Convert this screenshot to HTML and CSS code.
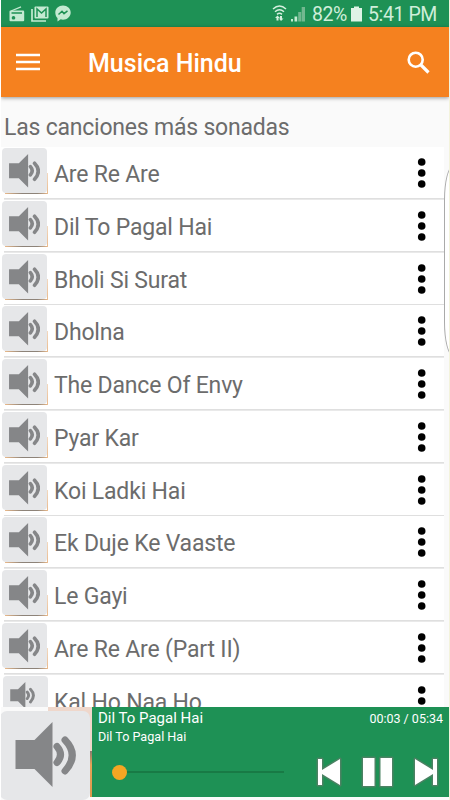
FILE: index.html
```html
<!DOCTYPE html>
<html lang="es">
  <head>
    <meta charset="UTF-8">
    <meta name="viewport" content="width=device-width, initial-scale=1.0">
    <title>Musica Hindu</title>
    <link rel="stylesheet" href="styles.css">
    <script src="script.js" defer></script>
  </head>
  <body>
    <svg class="symbols" width="0" height="0">
      <symbol id="speaker" viewBox="0 0 60 66">
        <path d="M0 18h19L37 0v65L19 47H0z" fill="#858688"/>
        <path d="M41.500 24.500q7 8 0 16M49.500 18q14.500 15 0 31" fill="none" stroke="#858688" stroke-width="7" stroke-linecap="round"/>
      </symbol>
    </svg>
    <div class="app">
      <div class="status-bar">
        <div class="notifications">
          <svg width="16" height="16" viewBox="0 0 16 16">
            <path d="M2 5 12 0.800" stroke="#c4ead2" stroke-width="1.300"/>
            <path fill="#c4ead2" fill-rule="evenodd" d="M1.500 4.500h12.500a1.200 1.200 0 0 1 1.200 1.200v8.500a1 1 0 0 1-1 1H1.500a1 1 0 0 1-1-1V5.500a1 1 0 0 1 1-1zM2.500 6.300v1.500h10.500v-1.500zM4.500 10a1.800 1.800 0 1 0 .01 0z"/>
          </svg>
          <svg width="18" height="16" viewBox="0 0 18 16">
            <path d="M1 3v12h14" fill="none" stroke="#c4ead2" stroke-width="1.700"/>
            <rect x="3.500" y="0.500" width="14" height="12" rx="1" fill="#c4ead2"/>
            <path d="M6 11V3l4.500 4L15 3v8" fill="none" stroke="#1e9155" stroke-width="1.500"/>
          </svg>
          <svg width="16" height="17" viewBox="0 0 16 17">
            <path fill="#c4ead2" d="M8 .5c4.300 0 7.700 3 7.700 7s-3.400 7.200-7.700 7.200q-1.200 0-2.300-.4L2.500 16.500v-3.400C1 11.700.3 9.700.3 7.500.3 3.500 3.700.5 8 .5z"/>
            <path d="M3.500 9.500 7 6.300l2 2.300 3.500-2.800" fill="none" stroke="#1e9155" stroke-width="1.500"/>
          </svg>
        </div>
        <div class="system">
          <svg class="wifi" width="15" height="17" viewBox="0 0 15 17">
            <path d="M1 4q6.500-6 13 0M3 6.800q4.500-4 9 0M5 9.300q2.500-2 5 0" fill="none" stroke="#d5f0df" stroke-width="1.500"/>
            <path fill="#d5f0df" d="M5.500 10.500 8 13H6.500v2.500h-2V13H3zM8 11h2v2.500h1.500L9 16l-2-2.500h1z"/>
          </svg>
          <svg class="signal" width="16" height="16" viewBox="0 0 16 16">
            <path fill="#c4ead2" d="M1 13h2v2.500H1zM4.500 10.500h2.700v5H4.500z"/>
            <path fill="#72b890" d="M8.200 6h3v9.500h-3zM11.700 1H15v14.500h-3.300z"/>
          </svg>
          <span class="percent">82%</span>
          <svg class="battery" width="11" height="16" viewBox="0 0 11 16">
            <path fill="#dff3e6" d="M3 .5h5V2h3v13.500H0V2h3z"/>
          </svg>
          <span class="clock">5:41 PM</span>
        </div>
      </div>

      <header class="toolbar">
        <svg class="menu" width="24" height="18" viewBox="0 0 24 18">
          <path d="M0 2h24M0 9h24M0 16h24" stroke="#fff" stroke-width="2.300"/>
        </svg>
        <h1>Musica Hindu</h1>
        <svg class="search" width="23" height="23" viewBox="0 0 23 23">
          <circle cx="8.700" cy="8.700" r="7" fill="none" stroke="#fff" stroke-width="2.600"/>
          <path d="m13.500 13.500 8 8" stroke="#fff" stroke-width="3.200"/>
        </svg>
      </header>

      <h2><span>Las canciones más sonadas</span></h2>
      <ul class="songs" id="songs"></ul>

      <footer class="player">
        <div class="cover">
          <div class="cover-tile">
            <svg width="61" height="66"><use href="#speaker"/></svg>
          </div>
        </div>
        <div class="panel">
          <div class="track">
            <div class="names">
              <div class="track-title">Dil To Pagal Hai</div>
              <div class="track-album">Dil To Pagal Hai</div>
            </div>
            <div class="time">00:03 / 05:34</div>
          </div>
          <div class="controls">
            <div class="seek"><span class="thumb"></span><span class="line"></span></div>
            <svg width="128" height="34" viewBox="0 0 128 34">
              <g fill="#4b8263" stroke="#4b8263" stroke-width="3" stroke-linejoin="round">
                <path d="M3 4h4v11L25 4v26L7 19v11H3z"/>
                <path d="M48 3h11.500v28H48zM65.500 3H77v28H65.500z"/>
                <path d="M100 4l18 11V4h4v26h-4V19l-18 11z"/>
              </g>
              <g fill="#fff">
                <path d="M3 4h4v11L25 4v26L7 19v11H3z"/>
                <path d="M48 3h11.500v28H48zM65.500 3H77v28H65.500z"/>
                <path d="M100 4l18 11V4h4v26h-4V19l-18 11z"/>
              </g>
            </svg>
          </div>
        </div>
      </footer>
      <div class="edge-handle"></div>
    </div>
  </body>
</html>
```
FILE: styles.css
```css
* {
  box-sizing: border-box;
}

body {
  margin: 0;
  background: #fff;
  font-family: Roboto, sans-serif;
  color: #6c6c6c;
}

.symbols {
  position: absolute;
}

.app {
  position: relative;
  width: 450px;
  height: 800px;
  overflow: hidden;
  display: flex;
  flex-direction: column;
  background: #fafafa;
  border-left: 1px solid #fff;
  border-right: 1px solid #f3f3dc;
}

svg {
  display: block;
  flex: none;
}

.status-bar {
  flex: none;
  height: 27px;
  margin-left: -1px;
  padding: 0 12px 0 9px;
  display: flex;
  justify-content: space-between;
  align-items: center;
  background: #1e9155;
  color: #cfeeda;
  font-size: 19.500px;
}

.notifications,
.system {
  display: flex;
  align-items: center;
}

.notifications {
  gap: 6px;
}

.signal {
  margin: 0 6px 0 3px;
}

.percent {
  width: 35px;
  letter-spacing: -0.5px;
}

.battery {
  margin: 0 6px 0 4px;
}

.clock {
  width: 69px;
  white-space: nowrap;
  letter-spacing: -0.4px;
}

.percent,
.clock {
  padding-top: 1px;
}

.toolbar {
  position: relative;
  flex: none;
  height: 70px;
  padding: 0 19px 0 15px;
  display: flex;
  align-items: center;
  background: #f5811f;
  box-shadow: 0 1px 4px rgba(0, 0, 0, 0.4);
}

h1 {
  flex: 1;
  margin: 2px 0 0 48px;
  color: #fff;
  font-size: 25px;
  font-weight: 500;
}

h2 {
  flex: none;
  height: 50px;
  margin: 0;
  padding: 16px 0 0 3px;
  font-size: 23px;
  letter-spacing: -0.210px;
  line-height: 30px;
  font-weight: 400;
}

.songs {
  flex: 1;
  min-height: 0;
  overflow: hidden;
  margin: 0;
  padding: 0;
  width: 443px;
  list-style: none;
  background: #fff;
}

.song {
  height: 52.750px;
  padding: 1px 17px 0 1px;
  display: flex;
  background: linear-gradient(#dfdfdf, #dfdfdf) 3px 51px / 440px 1.700px no-repeat;
}

.thumbnail {
  width: 46px;
  height: 47px;
  padding: 0 1px 1px 0;
  background:
    linear-gradient(#f3d9c0, #e9b98b) 45px 25px / 1px 21px no-repeat,
    linear-gradient(90deg, #e9b98b, #8d8379 40%, #8d8379 75%, #e9b98b) 3px 45px / 43px 1px no-repeat;
}

.tile {
  height: 45px;
  padding: 6px 0 0 7px;
  border-radius: 4px;
  background: #e6e7e9;
}

.song-name {
  flex: 1;
  padding: 2px 0 0 6px;
  font-size: 23px;
  letter-spacing: -0.180px;
  line-height: 50px;
}

.song:last-child .thumbnail {
  margin-left: 1px;
  background: none;
}

.song:last-child .song-name {
  padding-left: 5px;
}

.player {
  position: relative;
  flex: none;
  height: 93px;
  margin-left: -1px;
  display: flex;
}

.cover {
  width: 92px;
  height: 90px;
  padding-top: 4px;
  background:
    linear-gradient(#897a70, #e6a358 30%, #dc984e) 90px 44px / 2px 46px no-repeat,
    linear-gradient(#efd7cb, #efd7cb) 48px 0 / 44px 44px no-repeat;
}

.cover-tile {
  width: 90px;
  height: 89px;
  padding: 11px 0 0 15px;
  border-radius: 7px;
  background: #e6e7e9;
}

.panel {
  flex: 1;
  height: 90px;
  padding: 3px 6px 0;
  background: #1e9155;
  color: #fff;
}

.track {
  display: flex;
  justify-content: space-between;
  height: 43px;
}

.track-title {
  font-size: 15px;
  line-height: 16px;
}

.track-album {
  font-size: 12.600px;
  line-height: 21px;
}

.time {
  font-size: 12.500px;
  line-height: 17px;
}

.controls {
  display: flex;
  align-items: center;
  justify-content: space-between;
  height: 38px;
}

.seek {
  display: flex;
  align-items: center;
  width: 186px;
  padding-left: 14px;
}

.thumb {
  width: 15px;
  height: 15px;
  border-radius: 50%;
  background: #f5a623;
}

.line {
  flex: 1;
  height: 2px;
  background: #187a45;
}

.edge-handle {
  position: absolute;
  top: 166px;
  right: -13px;
  width: 18px;
  height: 190px;
  border: 1px solid #aaa;
  border-radius: 9px / 34px;
  background: #fff;
}
```
FILE: script.js
```javascript
const songs = [
  'Are Re Are',
  'Dil To Pagal Hai',
  'Bholi Si Surat',
  'Dholna',
  'The Dance Of Envy',
  'Pyar Kar',
  'Koi Ladki Hai',
  'Ek Duje Ke Vaaste',
  'Le Gayi',
  'Are Re Are (Part II)',
  'Kal Ho Naa Ho'
];

const list = document.getElementById('songs');

songs.forEach((name, i) => {
  const size = i === songs.length - 1 ? 'width="25" height="27"' : 'width="31" height="34"';
  const item = document.createElement('li');
  item.className = 'song';
  item.innerHTML = `
    <div class="thumbnail"><div class="tile"><svg ${size}><use href="#speaker"/></svg></div></div>
    <span class="song-name">${name}</span>
    <svg width="10" height="51" viewBox="0 0 10 51" fill="#000">
      <circle cx="4.700" cy="14" r="3.800"/>
      <circle cx="4.700" cy="25" r="3.800"/>
      <circle cx="4.700" cy="36" r="3.800"/>
    </svg>`;
  list.appendChild(item);
});
```
